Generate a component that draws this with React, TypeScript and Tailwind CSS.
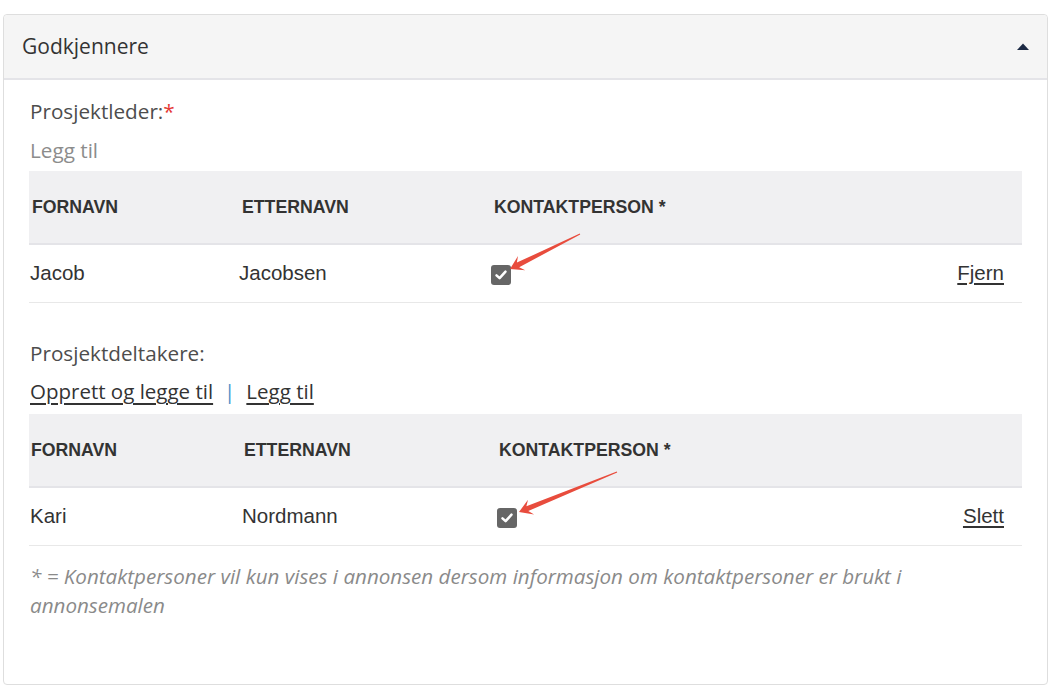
import React from "react";

function Check() {
  return (
    <span className="inline-flex h-[20px] w-[20px] items-center justify-center rounded-[3px] bg-[#666666]">
      <svg width="14" height="14" viewBox="0 0 14 14">
        <path d="M2.5 7.3 L5.6 10.2 L11.5 3.6" fill="none" stroke="#ffffff" strokeWidth="2.5" strokeLinecap="round" strokeLinejoin="round" />
      </svg>
    </span>
  );
}

function arrowPoints(tx: number, ty: number, px: number, py: number) {
  const dx = px - tx;
  const dy = py - ty;
  const len = Math.sqrt(dx * dx + dy * dy);
  const d = [dx / len, dy / len];
  const n = [-d[1], d[0]];
  const hl = 13;
  const hw = 8;
  const nl = 9;
  const bx = px - hl * d[0];
  const by = py - hl * d[1];
  const nx = px - nl * d[0];
  const ny = py - nl * d[1];
  const pts = [
    [tx + 0.4 * n[0], ty + 0.4 * n[1]],
    [nx + 2.6 * n[0], ny + 2.6 * n[1]],
    [bx + hw * n[0], by + hw * n[1]],
    [px, py],
    [bx - hw * n[0], by - hw * n[1]],
    [nx - 2.6 * n[0], ny - 2.6 * n[1]],
    [tx - 0.4 * n[0], ty - 0.4 * n[1]],
  ];
  return pts.map((p) => p[0].toFixed(1) + "," + p[1].toFixed(1)).join(" ");
}

type Row = { first: string; last: string; action: string };

function PersonTable({ row, cols, headPad }: { row: Row; cols: string; headPad: string }) {
  return (
    <div className="font-['Liberation_Sans',Arial,sans-serif] text-[#333333]">
      <div className={`grid ${cols} h-[74px] items-center border-b-2 border-[#e4e4e8] bg-[#f0f0f2] text-[17.7px] font-bold`}>
        <div className={headPad}>FORNAVN</div>
        <div className={headPad}>ETTERNAVN</div>
        <div className={headPad}>KONTAKTPERSON *</div>
        <div></div>
      </div>
      <div className={`grid ${cols} h-[58px] items-center border-b border-[#e8e8e8] text-[20.5px]`}>
        <div className="pl-px">{row.first}</div>
        <div>{row.last}</div>
        <div className="flex items-center pt-[3px]">
          <Check />
        </div>
        <div className="pr-[18px] text-right">
          <span className="underline underline-offset-[3px]">{row.action}</span>
        </div>
      </div>
    </div>
  );
}

export default function App() {
  return (
    <div className="relative min-h-[687px] w-[1052px] bg-white pl-[3px] pr-[4px] pt-[14px] font-['Open_Sans',sans-serif]">
      <div className="rounded-[4px] border border-[#dedede] bg-white">
        <div className="flex h-[65px] items-center justify-between rounded-t-[4px] border-b-2 border-[#e4e4e8] bg-[#f5f5f5] pl-[18px] pr-[18px]">
          <span className="text-[21px] text-[#333333]">Godkjennere</span>
          <svg width="12" height="7" viewBox="0 0 12 7">
            <path d="M0 7 L6 0.5 L12 7 Z" fill="#1c2a44" />
          </svg>
        </div>
        <div className="px-[25px] pb-[64px] pt-[16px]">
          <div className="pl-px text-[20.7px] leading-[30px] text-[#4d4d4d]">
            Prosjektleder:<span className="text-[#e53935]">*</span>
          </div>
          <div className="mt-[9px] pl-px text-[20.7px] leading-[30px] text-[#8c8c8c]">Legg til</div>
          <div className="mt-[6px]">
            <PersonTable
              row={{ first: "Jacob", last: "Jacobsen", action: "Fjern" }}
              cols="grid-cols-[210px_252px_1fr_auto]"
              headPad="pl-[3px]"
            />
          </div>
          <div className="mt-[35px] pl-px text-[20.7px] leading-[30px] text-[#4d4d4d]">Prosjektdeltakere:</div>
          <div className="mt-[8px] pl-px text-[20.5px] leading-[30px] text-[#333333]">
            <span className="underline underline-offset-[4px]">Opprett og legge til</span>
            <span className="mx-[11px] text-[#4a90c8]">|</span>
            <span className="underline underline-offset-[4px]">Legg til</span>
          </div>
          <div className="mt-[8px]">
            <PersonTable
              row={{ first: "Kari", last: "Nordmann", action: "Slett" }}
              cols="grid-cols-[213px_255px_1fr_auto]"
              headPad="pl-[2px]"
            />
          </div>
          <p className="mt-[16px] max-w-[930px] pl-px text-[20.6px] italic leading-[29px] text-[#8a8a8a]">
            * = Kontaktpersoner vil kun vises i annonsen dersom informasjon om kontaktpersoner er brukt i annonsemalen
          </p>
        </div>
      </div>
      <svg className="pointer-events-none absolute left-0 top-0" width="1052" height="687">
        <polygon points={arrowPoints(580, 234, 510, 269)} fill="#e84c3d" />
        <polygon points={arrowPoints(617, 472, 519, 512)} fill="#e84c3d" />
      </svg>
    </div>
  );
}
